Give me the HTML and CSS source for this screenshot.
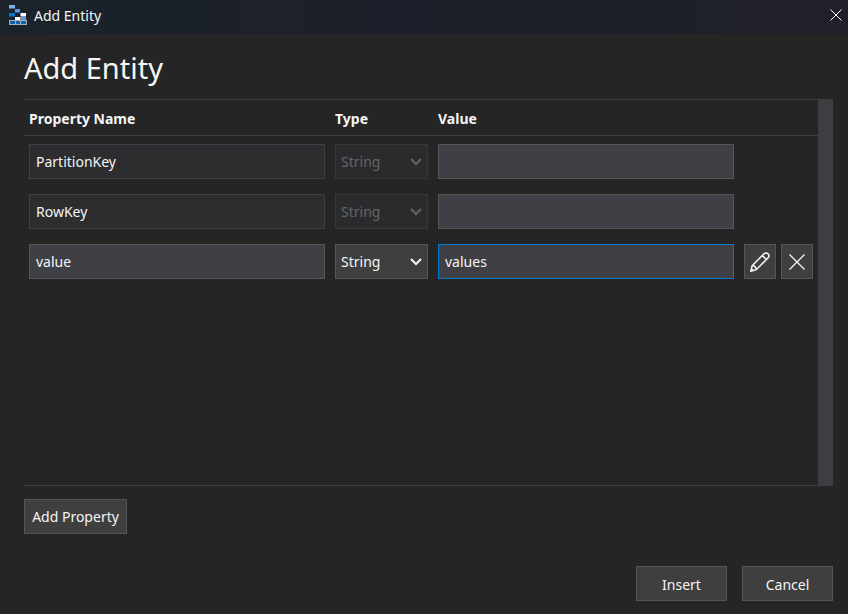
FILE: index.html
```html
<!DOCTYPE html>
<html lang="en">
<head>
<meta charset="utf-8">
<title>Add Entity</title>
<link rel="stylesheet" href="styles.css">
</head>
<body>
<header class="titlebar">
  <svg class="logo" viewBox="0 0 18 20" width="18" height="20" aria-hidden="true">
    <path fill="#a9adb3" d="M0 15h18v5H0z"/>
    <path fill="#0f62ab" d="M1 16h5v3H1zM7 16h4v3H7zM12 16h5v3h-5z"/>
    <path fill="#7fb2f3" d="M0 0h6v3.500H0z"/>
    <path fill="#5a96e8" d="M6 4h5v3.500H6zM12 12h5v3h-5z"/>
    <path fill="#0078d4" d="M0 8h6v3.500H0z"/>
    <path fill="#fff" d="M11.500 8H17v3.500h-5.500zM6 12h5.500v3H6z"/>
  </svg>
  <span class="caption">Add Entity</span>
  <button class="close" type="button" aria-label="Close">
    <svg viewBox="0 0 12 12" width="12" height="12"><path d="M.5.5l11 11M11.5.5l-11 11"/></svg>
  </button>
</header>
<form class="dialog">
  <h1>Add Entity</h1>
  <div class="list">
    <div class="viewport">
      <table>
        <colgroup><col><col class="col-type"><col><col class="col-actions"></colgroup>
        <thead>
          <tr><th>Property Name</th><th>Type</th><th>Value</th><td></td></tr>
        </thead>
        <tbody>
          <tr>
            <td><input class="field locked" aria-label="Property name 1" value="PartitionKey" readonly></td>
            <td><div class="picker"><select class="field" aria-label="Type 1" disabled><option>String</option></select><svg viewBox="0 0 12 8" width="12" height="8"><path d="M1 1l5 5 5-5"/></svg></div></td>
            <td><input class="field" aria-label="Value 1"></td>
            <td></td>
          </tr>
          <tr>
            <td><input class="field locked" aria-label="Property name 2" value="RowKey" readonly></td>
            <td><div class="picker"><select class="field" aria-label="Type 2" disabled><option>String</option></select><svg viewBox="0 0 12 8" width="12" height="8"><path d="M1 1l5 5 5-5"/></svg></div></td>
            <td><input class="field" aria-label="Value 2"></td>
            <td></td>
          </tr>
          <tr>
            <td><input class="field" aria-label="Property name 3" value="value"></td>
            <td><div class="picker"><select class="field" aria-label="Type 3"><option>String</option></select><svg viewBox="0 0 12 8" width="12" height="8"><path d="M1 1l5 5 5-5"/></svg></div></td>
            <td><input class="field active" aria-label="Value 3" value="values"></td>
            <td>
              <div class="actions">
                <button class="button icon" type="button" aria-label="Edit">
                  <svg class="pencil" viewBox="0 0 20 20" width="20" height="20"><path d="M.8 19.200l1.400-5.600L14 1.800c1.200-1.200 2.900-1.200 4 0s1.200 2.900 0 4.100L6.300 17.700zM2.200 13.600c2.200.2 3.700 1.700 4.100 4.100M12.300 3.500l4.100 4.100M.8 19.200l.6-2.400 1.800 1.800z"/></svg>
                </button>
                <button class="button icon" type="button" aria-label="Remove">
                  <svg viewBox="0 0 16 16" width="16" height="16"><path d="M.5.5l15 15M15.500.5l-15 15"/></svg>
                </button>
              </div>
            </td>
          </tr>
        </tbody>
      </table>
    </div>
    <div class="track"></div>
  </div>
  <div class="tools"><button class="button" type="button">Add Property</button></div>
  <footer>
    <button class="button wide" type="button">Insert</button>
    <button class="button wide" type="button">Cancel</button>
  </footer>
</form>
</body>
</html>
```
FILE: styles.css
```css
* {
  box-sizing: border-box;
}

body {
  margin: 0;
  min-height: 100vh;
  display: flex;
  flex-direction: column;
  background: #252525;
  color: #f5f5f5;
  font: 14px/20px "Segoe UI", "Noto Sans", sans-serif;
}

svg {
  display: block;
  fill: none;
  stroke: currentColor;
}

.titlebar {
  display: flex;
  align-items: center;
  height: 34px;
  padding: 0 6px 4px 9px;
  background: linear-gradient(90deg, #1b222a, #1c202a 50%, #202028);
}

.logo {
  stroke: none;
}

.caption {
  flex: 1;
  margin-left: 7px;
  line-height: 22px;
  padding-top: 2px;
}

.close {
  padding: 0;
  border: 0;
  background: none;
  color: #fff;
}

.dialog {
  flex: 1;
  display: flex;
  flex-direction: column;
  padding: 14px 15px 13px 24px;
}

h1 {
  margin: 0 0 11px;
  font-size: 29px;
  line-height: 40px;
  font-weight: 400;
}

.list {
  flex: 1;
  display: flex;
}

.viewport {
  flex: 1;
  border: solid #3f3f46;
  border-width: 1px 0;
}

.track {
  width: 15px;
  background: #3e3e42;
}

table {
  width: 100%;
  table-layout: fixed;
  border-spacing: 0;
}

.col-type {
  width: 103px;
}

.col-actions {
  width: 79px;
}

thead th,
thead td {
  height: 36px;
  padding: 2px 5px 0;
  border-bottom: 1px solid #3f3f46;
  text-align: left;
  font-weight: 700;
}

tbody td {
  padding: 8px 5px 7px;
}

.field,
.button {
  display: block;
  height: 35px;
  border: 1px solid #555;
  border-radius: 0;
  outline: 0;
  background: #3f3f40;
  color: inherit;
  font: inherit;
}

.field {
  width: 100%;
  padding: 0 6px;
}

input.field {
  background: #3f4045;
}

input.locked {
  border-color: #3f3f46;
  background: #2d2d30;
}

input.active {
  border-color: #007acc;
}

.picker {
  position: relative;
}

select.field {
  appearance: none;
  padding: 0 5px;
  opacity: 1;
}

select.field:disabled {
  border-color: #38383b;
  background: #2b2b2d;
  color: #656565;
}

.picker svg {
  position: absolute;
  top: 14px;
  right: 6px;
  stroke-width: 2;
  pointer-events: none;
}

select:disabled + svg {
  color: #656565;
}

.actions {
  display: flex;
  gap: 5px;
}

.button {
  padding: 0 6px;
}

.tools .button {
  min-width: 103px;
}

.icon {
  width: 32px;
  padding: 0 5px;
}

.icon svg {
  margin: auto;
  stroke-width: 1.3;
}

.icon .pencil {
  stroke-width: 1.5;
}

.wide {
  width: 91px;
  padding-top: 2px;
}

.tools {
  margin: 13px 0 32px;
}

footer {
  display: flex;
  justify-content: flex-end;
  gap: 15px;
}
```
